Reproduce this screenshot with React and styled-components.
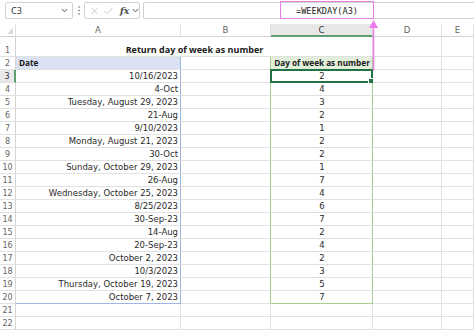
import React from "react";
import styled, { createGlobalStyle } from "styled-components";

const Global = createGlobalStyle`
  html, body { margin: 0; padding: 0; background: #fff; overflow: hidden; }
  * { box-sizing: border-box; }
`;

const Page = styled.div`
  position: relative;
  width: 474px;
  height: 331px;
  background: #fff;
  font-family: "DejaVu Sans", sans-serif;
`;

const Toolbar = styled.div`
  display: flex;
  align-items: center;
  height: 24px;
  padding: 0 0 3px 5px;
  gap: 0;
`;

const Box = styled.div`
  height: 17px;
  border: 1px solid #d2d2d2;
  border-radius: 2px;
  background: #fff;
  display: flex;
  align-items: center;
`;

const NameBox = styled(Box)`
  width: 68px;
  justify-content: space-between;
  padding: 0 4px 0 5px;
  font-family: "Noto Sans", sans-serif;
  font-size: 9px;
  color: #333;
`;

const Dots = styled.div`
  width: 11px;
  display: flex;
  justify-content: center;
`;

const FxBox = styled(Box)`
  width: 56px;
  gap: 0;
  padding-left: 5px;
`;

const FxText = styled.span`
  font-family: "DejaVu Serif", serif;
  font-style: italic;
  font-size: 10px;
  font-weight: bold;
  color: #555;
  margin-left: 6px;
  letter-spacing: -0.5px;
`;

const FormulaBar = styled(Box)`
  flex: 1;
  margin-left: 3px;
  border-right: none;
  border-radius: 2px 0 0 2px;
  position: relative;
`;

const Highlight = styled.div`
  position: absolute;
  left: 136px;
  top: -2px;
  width: 94px;
  height: 18px;
  border: 1.5px solid #ec7ce9;
  display: flex;
  align-items: center;
  justify-content: center;
  font-family: "DejaVu Sans Mono", monospace;
  font-size: 8.6px;
  color: #222;
  padding-top: 1px;
`;

const Grid = styled.div`
  display: grid;
  grid-template-columns: 16px 165px 90px 102px 69px 1fr;
  grid-template-rows: 13px 20px repeat(21, 13px);
`;

const Corner = styled.div`
  position: relative;
  border-right: 1px solid #e1e1e1;
  border-bottom: 1px solid #d4d4d4;
  &::after {
    content: "";
    position: absolute;
    right: 2px;
    bottom: 2px;
    border-style: solid;
    border-width: 0 0 6px 6px;
    border-color: transparent transparent #dadada transparent;
  }
`;

const ColHead = styled.div`
  display: flex;
  align-items: center;
  justify-content: center;
  font-size: 8.5px;
  color: ${(p) => (p.$active ? "#333" : "#666")};
  background: ${(p) => (p.$active ? "#e8e8e8" : "#fff")};
  border-right: 1px solid #e1e1e1;
  border-bottom: ${(p) => (p.$active ? "2px solid #5f9e6e" : "1px solid #d4d4d4")};
`;

const RowHead = styled.div`
  display: flex;
  align-items: flex-end;
  justify-content: center;
  padding-bottom: 1px;
  font-size: 8px;
  color: ${(p) => (p.$active ? "#333" : "#666")};
  background: ${(p) => (p.$active ? "#e8e8e8" : "#fff")};
  border-right: ${(p) => (p.$active ? "2px solid #5f9e6e" : "1px solid #d4d4d4")};
  border-bottom: 1px solid #e1e1e1;
`;

const Cell = styled.div`
  position: relative;
  display: flex;
  align-items: flex-end;
  justify-content: ${(p) => p.$align || "flex-start"};
  padding: 0 2px 0 3px;
  font-size: 8.5px;
  color: #2a2a2a;
  white-space: nowrap;
  grid-column: ${(p) => (p.$span ? `span ${p.$span}` : "auto")};
  background: ${(p) => p.$fill || "#fff"};
  border-right: 1px solid ${(p) => p.$right || "#e1e1e1"};
  border-bottom: 1px solid ${(p) => p.$bottom || "#e1e1e1"};
  line-height: 12px;
`;

const HeadText = styled.span`
  font-family: "Open Sans", sans-serif;
  font-weight: 700;
  font-size: ${(p) => p.$size || 8.2}px;
  color: #1a1a1a;
  line-height: 12px;
`;

const Selected = styled.div`
  position: absolute;
  left: -1px;
  top: -1px;
  right: -1px;
  bottom: -1px;
  border: 2px solid #217346;
  &::after {
    content: "";
    position: absolute;
    right: -4px;
    bottom: -4px;
    width: 5px;
    height: 5px;
    background: #217346;
    border: 1px solid #fff;
  }
`;

const Arrow = styled.svg`
  position: absolute;
  left: 368px;
  top: 19px;
  pointer-events: none;
`;

const dates = [
  "10/16/2023",
  "4-Oct",
  "Tuesday, August 29, 2023",
  "21-Aug",
  "9/10/2023",
  "Monday, August 21, 2023",
  "30-Oct",
  "Sunday, October 29, 2023",
  "26-Aug",
  "Wednesday, October 25, 2023",
  "8/25/2023",
  "30-Sep-23",
  "14-Aug",
  "20-Sep-23",
  "October 2, 2023",
  "10/3/2023",
  "Thursday, October 19, 2023",
  "October 7, 2023",
];
const nums = [2, 4, 3, 2, 1, 2, 2, 1, 7, 4, 6, 7, 2, 4, 2, 3, 5, 7];

const BLUE = "#9fb6e0";
const GREEN = "#a9cf8f";

const Chevron = () => (
  <svg width="7" height="5" viewBox="0 0 7 5">
    <path d="M0.8 1 L3.5 3.8 L6.2 1" fill="none" stroke="#555" strokeWidth="1" />
  </svg>
);

export default function App() {
  const rows = [];
  for (let i = 0; i < 18; i++) {
    const r = i + 3;
    const last = r === 20;
    rows.push(
      <React.Fragment key={r}>
        <RowHead $active={r === 3}>{r}</RowHead>
        <Cell $align="flex-end" $right={BLUE} $bottom={last ? BLUE : undefined}>
          {dates[i]}
        </Cell>
        <Cell $right={GREEN} />
        <Cell $align="center" $right={GREEN} $bottom={last ? GREEN : undefined}>
          {nums[i]}
          {r === 3 && <Selected />}
        </Cell>
        <Cell />
        <Cell />
      </React.Fragment>
    );
  }
  for (const r of [21, 22]) {
    rows.push(
      <React.Fragment key={r}>
        <RowHead>{r}</RowHead>
        <Cell />
        <Cell />
        <Cell />
        <Cell />
        <Cell />
      </React.Fragment>
    );
  }

  return (
    <Page>
      <Global />
      <Toolbar>
        <NameBox>
          <span>C3</span>
          <Chevron />
        </NameBox>
        <Dots>
          <svg width="2" height="9" viewBox="0 0 2 9">
            <circle cx="1" cy="1" r="0.8" fill="#666" />
            <circle cx="1" cy="4.5" r="0.8" fill="#666" />
            <circle cx="1" cy="8" r="0.8" fill="#666" />
          </svg>
        </Dots>
        <FxBox>
          <svg width="10" height="10" viewBox="0 0 10 10">
            <path d="M1.5 1.5 L8.5 8.5 M8.5 1.5 L1.5 8.5" stroke="#c4c4c4" strokeWidth="1" />
          </svg>
          <svg width="12" height="10" viewBox="0 0 12 10" style={{ marginLeft: 4 }}>
            <path d="M1.5 5 L4.5 8 L10.5 1.5" fill="none" stroke="#c4c4c4" strokeWidth="1" />
          </svg>
          <FxText>fx</FxText>
          <span style={{ marginLeft: 3, display: "flex" }}>
            <Chevron />
          </span>
        </FxBox>
        <FormulaBar>
          <Highlight>=WEEKDAY(A3)</Highlight>
        </FormulaBar>
      </Toolbar>
      <Grid>
        <Corner />
        <ColHead>A</ColHead>
        <ColHead>B</ColHead>
        <ColHead $active>C</ColHead>
        <ColHead>D</ColHead>
        <ColHead>E</ColHead>

        <RowHead>1</RowHead>
        <Cell $span={3} $align="center">
          <HeadText $size={9}>Return day of week as number</HeadText>
        </Cell>
        <Cell />
        <Cell />

        <RowHead>2</RowHead>
        <Cell $fill="#d9e1f2" $right={BLUE}>
          <HeadText>Date</HeadText>
        </Cell>
        <Cell $right={GREEN} />
        <Cell $fill="#e2efda" $align="center" $right={GREEN}>
          <HeadText>Day of week as number</HeadText>
        </Cell>
        <Cell />
        <Cell />

        {rows}
      </Grid>
      <Arrow width="11" height="52" viewBox="0 0 11 52">
        <path d="M5.5 1 L1 9 L10 9 Z" fill="#ec7ce9" />
        <path d="M5.5 8 L5.5 52" stroke="#ec7ce9" strokeWidth="1.5" />
      </Arrow>
    </Page>
  );
}
